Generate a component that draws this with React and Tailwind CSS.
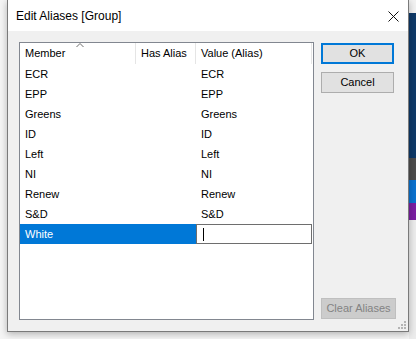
const rows = ["ECR", "EPP", "Greens", "ID", "Left", "NI", "Renew", "S&D"];

function Row({ name }) {
  return (
    <div className="flex h-[20px] items-center text-black">
      <div className="w-[176px] pl-[5px]">{name}</div>
      <div className="pl-[5px]">{name}</div>
    </div>
  );
}

function Btn({ children, primary, disabled, wide }) {
  const border = primary
    ? "border-2 border-[#0078d7]"
    : disabled
    ? "border border-[#bfbfbf]"
    : "border border-[#adadad]";
  const tone = disabled ? "bg-[#cccccc] text-[#838383]" : "bg-[#e1e1e1] text-black";
  return (
    <div className={`flex h-[21px] items-center justify-center ${wide ? "w-[75px]" : "w-[73px]"} ${border} ${tone}`}>
      {children}
    </div>
  );
}

export default function App() {
  return (
    <div
      className="flex h-[339px] w-[416px] overflow-hidden bg-[#f5f5f5] text-[11px] leading-none"
      style={{ fontFamily: "'Liberation Sans', Arial, sans-serif" }}
    >
      <div className="w-[7px] shrink-0" />

      <div className="relative z-10 flex h-[332px] w-[402px] shrink-0 flex-col border-x border-b border-[#7a7a7a] shadow-[0_2px_7px_rgba(0,0,0,0.28)]">
        {/* title bar */}
        <div className="flex h-[31px] items-center justify-between bg-white pl-[8px] pr-[9px]">
          <span className="text-[12px] text-black">Edit Aliases [Group]</span>
          <svg width="11" height="11" viewBox="0 0 11 11" className="mt-[1px]">
            <path d="M0.5 0.5 L10.5 10.5 M10.5 0.5 L0.5 10.5" stroke="#111" strokeWidth="1" fill="none" />
          </svg>
        </div>

        {/* body */}
        <div className="relative flex flex-1 gap-[7px] bg-[#f0f0f0] pl-[11px] pt-[11px]">
          <div className="flex h-[278px] w-[295px] flex-col border border-[#828790] bg-white">
            <div className="relative flex h-[21px] items-center text-black">
              <div className="flex h-full w-[116px] items-center border-r border-[#e5e5e5] pl-[5px]">Member</div>
              <div className="flex h-full w-[60px] items-center border-r border-[#e5e5e5] pl-[5px]">Has Alias</div>
              <div className="flex h-full w-[116px] items-center border-r border-[#e5e5e5] pl-[5px]">Value (Alias)</div>
              <svg width="8" height="5" viewBox="0 0 8 5" className="absolute left-[56px] top-0">
                <path d="M0.5 4 L4 0.5 L7.5 4" stroke="#6d6d6d" strokeWidth="1" fill="none" />
              </svg>
            </div>
            {rows.map((r) => (
              <Row key={r} name={r} />
            ))}
            <div className="flex h-[20px]">
              <div className="flex w-[176px] items-center bg-[#0078d7] pl-[5px] text-white">White</div>
              <div className="flex w-[116px] items-center border border-[#6e6e6e] bg-white pl-[6px]">
                <div className="h-[13px] w-[1px] bg-black" />
              </div>
            </div>
          </div>

          <div className="flex h-[278px] flex-col pt-[1px] pb-[1px]">
            <Btn primary>OK</Btn>
            <div className="h-[8px]" />
            <Btn>Cancel</Btn>
            <div className="flex-1" />
            <Btn disabled wide>Clear Aliases</Btn>
          </div>

          <svg width="8" height="8" viewBox="0 0 8 8" className="absolute bottom-[2px] right-[2px]">
            <g fill="#b4b4b4">
              <rect x="6" y="0" width="2" height="2" />
              <rect x="3" y="3" width="2" height="2" />
              <rect x="6" y="3" width="2" height="2" />
              <rect x="0" y="6" width="2" height="2" />
              <rect x="3" y="6" width="2" height="2" />
              <rect x="6" y="6" width="2" height="2" />
            </g>
          </svg>
        </div>
      </div>

      <div className="flex flex-1 flex-col">
        <div className="h-[13px] bg-[#f2f2f2]" />
        <div className="h-[145px] bg-[#0f3a68]" />
        <div className="h-[22px] bg-[#4d4d4d]" />
        <div className="h-[23px] bg-[#0b72cf]" />
        <div className="h-[17px] bg-[#7b1fa2]" />
        <div className="flex-1 bg-[#ececec]" />
      </div>
    </div>
  );
}
